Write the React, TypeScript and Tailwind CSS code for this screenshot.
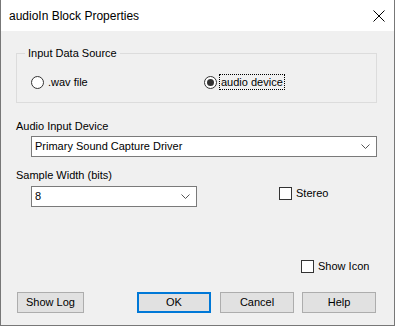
import React from 'react'

const font = { fontFamily: '"Liberation Sans", Arial, sans-serif' }

function Chevron() {
  return (
    <svg width="9" height="5" viewBox="0 0 9 5" className="shrink-0">
      <path d="M0.5 0.5 L4.5 4.5 L8.5 0.5" fill="none" stroke="#555" strokeWidth="1" />
    </svg>
  )
}

function Combo({ value, className }: { value: string; className: string }) {
  return (
    <div className={`h-[21px] bg-white border border-[#7a7a7a] flex items-center pl-[3px] pr-[6px] ${className}`}>
      <span className="flex-1 text-[11px] text-black">{value}</span>
      <Chevron />
    </div>
  )
}

function Radio({ checked }: { checked?: boolean }) {
  return (
    <span className="w-[13px] h-[13px] rounded-full border border-[#333] bg-white flex items-center justify-center shrink-0">
      {checked && <span className="w-[7px] h-[7px] rounded-full bg-[#333]" />}
    </span>
  )
}

function Check() {
  return <span className="w-[13px] h-[13px] border border-[#333] bg-white shrink-0" />
}

function Btn({ label, className }: { label: string; className: string }) {
  return (
    <button className={`h-[21px] bg-[#e1e1e1] text-[11px] text-black flex items-center justify-center ${className}`}>
      {label}
    </button>
  )
}

export default function App() {
  return (
    <div className="w-[395px] h-[326px] flex flex-col border-x border-b border-[#777] bg-white text-black" style={font}>
      <div className="h-[31px] shrink-0 flex items-center pl-[8px] pr-[8px] bg-white">
        <span className="flex-1 text-[12px]">audioIn Block Properties</span>
        <svg width="12" height="12" viewBox="0 0 12 12" className="mr-[1px]">
          <path d="M0.5 0.5 L11.5 11.5 M11.5 0.5 L0.5 11.5" stroke="#000" strokeWidth="1" />
        </svg>
      </div>

      <div className="flex-1 bg-[#f0f0f0] flex flex-col pl-[15px] pr-[17px] text-[11px] leading-[13px]">
        <fieldset className="mt-[16px] border border-[#dcdcdc] h-[56px] px-[14px]">
          <legend className="ml-[-6px] px-[3px] leading-[13px]">Input Data Source</legend>
          <div className="flex items-center mt-[14px] leading-[13px]">
            <div className="flex items-center gap-[4px] w-[173px]">
              <Radio />
              <span>.wav file</span>
            </div>
            <div className="flex items-center gap-[2px]">
              <Radio checked />
              <span className="border border-dotted border-black px-[1px] leading-[14px]">audio device</span>
            </div>
          </div>
        </fieldset>

        <div className="mt-[17px]">Audio Input Device</div>
        <Combo value="Primary Sound Capture Driver" className="mt-[3px] ml-[15px]" />

        <div className="mt-[12px]">Sample Width (bits)</div>
        <div className="flex items-start mt-[4px]">
          <Combo value="8" className="ml-[15px] w-[166px]" />
          <div className="flex items-center gap-[4px] ml-[82px] mt-[1px]">
            <Check />
            <span>Stereo</span>
          </div>
        </div>

        <div className="flex mt-[53px] pl-[285px]">
          <div className="flex items-center gap-[4px]">
            <Check />
            <span>Show Icon</span>
          </div>
        </div>

        <div className="flex items-center mt-[19px]">
          <Btn label="Show Log" className="ml-[1px] w-[67px] border border-[#adadad]" />
          <Btn label="OK" className="ml-[53px] w-[74px] border-2 border-[#0078d7]" />
          <Btn label="Cancel" className="ml-[9px] w-[74px] border border-[#adadad]" />
          <Btn label="Help" className="ml-[8px] w-[74px] border border-[#adadad]" />
        </div>
      </div>
    </div>
  )
}
